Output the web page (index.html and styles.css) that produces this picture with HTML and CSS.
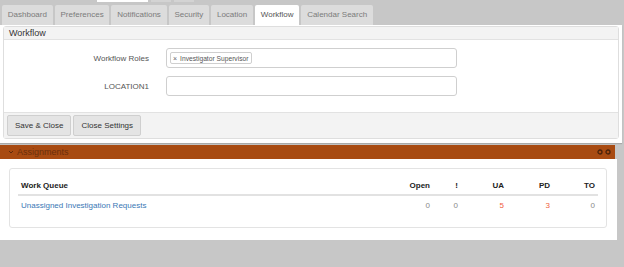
FILE: index.html
```html
<!DOCTYPE html>
<html lang="en">
  <head>
    <meta charset="UTF-8" />
    <title>Settings - Workflow</title>
    <link rel="stylesheet" href="styles.css">
  </head>
  <body>
    <div class="topstrip">
      <span class="strip-white"></span>
      <span class="strip-box"></span>
      <span class="strip-box"></span>
    </div>

    <ul class="tabs">
      <li class="tab">Dashboard</li>
      <li class="tab">Preferences</li>
      <li class="tab">Notifications</li>
      <li class="tab">Security</li>
      <li class="tab">Location</li>
      <li class="tab active">Workflow</li>
      <li class="tab">Calendar Search</li>
    </ul>

    <div class="settings">
      <div class="panel">
        <div class="panel-heading">Workflow</div>
        <div class="panel-body">
          <div class="form-row">
            <label class="form-label">Workflow Roles</label>
            <div class="form-input">
              <span class="tag"><span class="tag-x">&times;</span>Investigator Supervisor</span>
            </div>
          </div>
          <div class="form-row">
            <label class="form-label">LOCATION1</label>
            <div class="form-input"></div>
          </div>
        </div>
        <div class="panel-footer">
          <button class="btn">Save &amp; Close</button>
          <button class="btn">Close Settings</button>
        </div>
      </div>
    </div>

    <div class="widget">
      <div class="widget-head">
        <svg class="chev" width="6" height="4" viewBox="0 0 6 4"><polyline points="1,1 3,3 5,1" fill="none" stroke="#5e2a0c" stroke-width="1"/></svg>
        <span class="widget-title">Assignments</span>
        <span class="widget-tools">
          <svg width="6" height="6" viewBox="0 0 6 6"><circle cx="3" cy="3" r="2" fill="none" stroke="#4a220a" stroke-width="1.3"/></svg>
          <svg width="6" height="6" viewBox="0 0 6 6"><circle cx="3" cy="3" r="2" fill="none" stroke="#4a220a" stroke-width="1.3"/></svg>
        </span>
      </div>
      <div class="widget-body">
        <div class="card">
          <table class="queue">
            <colgroup>
              <col class="c-name">
              <col class="c-open">
              <col class="c-bang">
              <col class="c-num">
              <col class="c-num">
              <col class="c-to">
            </colgroup>
            <thead>
              <tr>
                <th class="left">Work Queue</th>
                <th>Open</th>
                <th>!</th>
                <th>UA</th>
                <th>PD</th>
                <th>TO</th>
              </tr>
            </thead>
            <tbody>
              <tr>
                <td class="left"><a href="#">Unassigned Investigation Requests</a></td>
                <td class="zero">0</td>
                <td class="zero">0</td>
                <td class="hot">5</td>
                <td class="hot">3</td>
                <td class="zero">0</td>
              </tr>
            </tbody>
          </table>
        </div>
      </div>
    </div>
  </body>
</html>
```

FILE: styles.css
```css
body {
  margin: 0;
  background: #c7c7c7;
  font-family: "Liberation Sans", Arial, sans-serif;
  font-size: 8px;
  color: #333;
}

.topstrip {
  display: flex;
  height: 5px;
  padding-left: 97px;
}

.strip-white {
  width: 51px;
  height: 2px;
  background: #fff;
}

.strip-box {
  width: 20px;
  height: 2px;
  margin-left: 3px;
  background: #d3d3d3;
}

.tabs {
  list-style: none;
  margin: 0;
  padding: 0 0 0 2px;
  display: flex;
  gap: 2px;
  height: 20px;
}

.tab {
  background: #dcdcdc;
  color: #7b7b7b;
  padding: 0 5.8px;
  line-height: 20px;
  border-radius: 2px 2px 0 0;
}

.tab.active {
  background: #fff;
  color: #555;
}

.settings {
  width: 616px;
  background: #fff;
  padding: 1px 3px 4px 3px;
  box-shadow: 0 1px 1px #a9a9a9;
}

.panel {
  border: 1px solid #dedede;
  border-radius: 3px;
}

.panel-heading {
  height: 12px;
  line-height: 12px;
  padding-left: 5px;
  font-size: 9px;
  color: #333;
  background: #f3f3f3;
  border-bottom: 1px solid #e2e2e2;
}

.panel-body {
  padding: 8px 0 16px 0;
  display: flex;
  flex-direction: column;
  gap: 8px;
}

.form-row {
  display: grid;
  grid-template-columns: 145px 291px;
  column-gap: 17px;
  align-items: center;
}

.form-label {
  text-align: right;
  color: #555;
}

.form-input {
  height: 18px;
  border: 1px solid #cfcfcf;
  border-radius: 3px;
  display: flex;
  align-items: center;
  padding-left: 3px;
}

.tag {
  display: inline-flex;
  align-items: center;
  height: 10px;
  padding: 0 2px;
  border: 1px solid #cfcfcf;
  border-radius: 2px;
  font-size: 6.7px;
  color: #555;
}

.tag-x {
  font-size: 7px;
  margin-right: 3px;
  color: #666;
}

.panel-footer {
  background: #f3f3f3;
  border-top: 1px solid #e2e2e2;
  padding: 2px 3px 2px 3px;
  display: flex;
  gap: 2px;
}

.btn {
  height: 21px;
  padding: 0 7px;
  font-family: "Liberation Sans", Arial, sans-serif;
  font-size: 8px;
  color: #333;
  background: #e4e4e4;
  border: 1px solid #cfcfcf;
  border-radius: 2px;
}

.widget {
  width: 617px;
  margin-top: 2px;
}

.widget-head {
  height: 14px;
  background: #a84b12;
  display: flex;
  align-items: center;
  padding-left: 8px;
  margin-right: 2px;
}

.chev {
  margin-right: 3px;
}

.widget-title {
  font-size: 9px;
  color: #6a2f0c;
}

.widget-tools {
  margin-left: auto;
  display: flex;
  gap: 2px;
  margin-right: 4px;
}

.widget-body {
  background: #fff;
  padding: 9px 10px 12px 9px;
}

.card {
  border: 1px solid #e3e3e3;
  border-radius: 3px;
  padding: 7px 8px 13px 8px;
}

.queue {
  width: 580px;
  table-layout: fixed;
  border-collapse: collapse;
}

.c-name { width: 362px; }
.c-open { width: 53px; }
.c-bang { width: 28px; }
.c-num { width: 46px; }
.c-to { width: 45px; }

.queue th,
.queue td {
  height: 18px;
  padding: 0 3px 0 0;
  text-align: right;
}

.queue th {
  font-weight: bold;
  color: #222;
  border-bottom: 2px solid #e2e2e2;
}

.queue .left {
  text-align: left;
  padding-left: 3px;
}

.queue a {
  color: #3a78b5;
  text-decoration: none;
}

.zero {
  color: #8a8a8a;
}

.hot {
  color: #f0603e;
}
```
